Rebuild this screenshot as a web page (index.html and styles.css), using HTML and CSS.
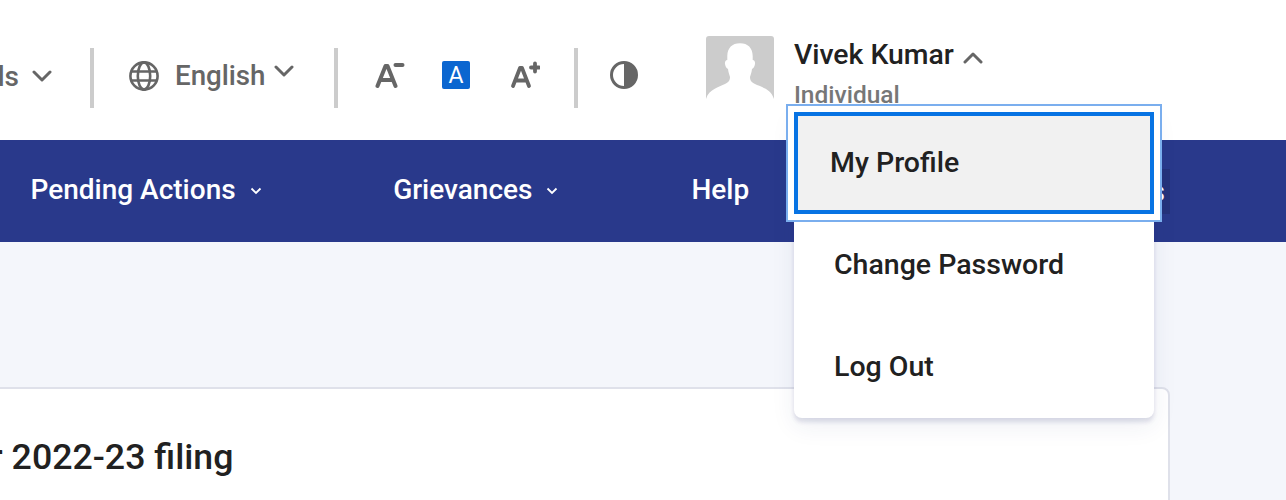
FILE: index.html
```html
<!DOCTYPE html>
<html lang="en">
<head>
<meta charset="utf-8">
<title>Profile menu</title>
<link rel="stylesheet" href="styles.css">
</head>
<body>
<div class="page">
  <header class="topbar">
    <div class="clip-left"><span>Downloads</span></div>
    <svg class="chev chev-first" viewBox="0 0 20 12"><path d="M2 2l8 8 8-8"/></svg>
    <span class="sep sep-a"></span>
    <svg class="globe" viewBox="0 0 30 30"><g fill="none" stroke="#666" stroke-width="2.6"><circle cx="15" cy="15" r="13.6"/><ellipse cx="15" cy="15" rx="6.2" ry="13.6"/><path d="M2.5 10.5h25M2.5 19.5h25"/></g></svg>
    <span class="lang">English</span>
    <svg class="chev chev-lang" viewBox="0 0 20 12"><path d="M2 2l8 8 8-8"/></svg>
    <span class="sep sep-b"></span>
    <svg class="font-ico ico-minus" viewBox="0 0 30 28"><g fill="none" stroke="#666" stroke-width="4" stroke-linecap="round" stroke-linejoin="round"><path d="M2.500 25L10.500 5h2l8 20M6 19h11"/><path d="M20.500 4h7"/></g></svg>
    <span class="font-active">A</span>
    <svg class="font-ico ico-plus" viewBox="0 0 30 28"><g fill="none" stroke="#666" stroke-width="3.8" stroke-linecap="round" stroke-linejoin="round"><path d="M3 25L10 7h2l7 18M6 19.500h10"/><path d="M21 6.500h8M25 2.500v8"/></g></svg>
    <span class="sep sep-c"></span>
    <svg class="contrast" viewBox="0 0 28 28"><circle cx="14" cy="14" r="12.500" fill="none" stroke="#666" stroke-width="3"/><path d="M14 1.500a12.500 12.500 0 0 1 0 25z" fill="#666"/></svg>
    <svg class="avatar" viewBox="0 0 68 66"><rect width="68" height="66" rx="3" fill="#ccc"/><path d="M34 7.300C42 7.300 46.500 12 46.700 20V24C48.500 24 49.300 26 49 28C48.600 30.500 47.500 32.500 46 33C45.500 37 44.500 39 44 41C44 44 45 46 49 48C55 51 65 53 68 63V66H0V63C3 53 13 51 19 48C23 46 24 44 24 41C23.500 39 22.500 37 22 33C20.500 32.500 19.400 30.500 19 28C18.700 26 19.500 24 21.300 24V20C21.500 12 26 7.300 34 7.300Z" fill="#fff"/></svg>
    <div class="user">
      <div class="user-name">Vivek Kumar <svg class="chev chev-up" viewBox="0 0 20 12"><path d="M2 10l8-8 8 8"/></svg></div>
      <div class="user-role">Individual</div>
    </div>
  </header>
  <nav class="mainnav">
    <a class="nav-item nav-pending">Pending Actions <svg class="nav-chev" viewBox="0 0 12 8"><path d="M1.500 1.500L6 6l4.500-4.500"/></svg></a>
    <a class="nav-item nav-griev">Grievances <svg class="nav-chev" viewBox="0 0 12 8"><path d="M1.500 1.500L6 6l4.500-4.500"/></svg></a>
    <a class="nav-item nav-help">Help</a>
    <a class="nav-item nav-last">Learning Resources</a>
  </nav>
  <main class="content">
    <section class="card">
      <h2 class="card-title">Get ready for 2022-23 filing</h2>
    </section>
  </main>
  <ul class="menu">
    <li class="menu-item menu-focus">My Profile</li>
    <li class="menu-item">Change Password</li>
    <li class="menu-item">Log Out</li>
  </ul>
</div>
</body>
</html>
```
FILE: styles.css
```css
* { box-sizing: border-box; }
html, body { margin: 0; padding: 0; }
body { font-family: Roboto, "Liberation Sans", sans-serif; background: #fff; }
.page { position: relative; width: 1286px; height: 500px; overflow: hidden; }

.topbar { display: flex; align-items: center; height: 140px; background: #fff; color: #666; font-weight: 500; font-size: 28px; }
.clip-left { width: 19px; overflow: hidden; display: flex; justify-content: flex-end; white-space: nowrap; margin-top: 12px; }
.chev { fill: none; stroke: #666; stroke-width: 3; stroke-linecap: round; stroke-linejoin: round; display: block; }
.chev-first { width: 20px; height: 12px; margin-left: 13px; margin-top: 12px; }
.sep { width: 4px; height: 60px; background: #ccc; flex: none; margin-top: 16px; }
.sep-a { margin-left: 38px; }
.globe { width: 30px; height: 30px; margin-left: 35px; margin-top: 12px; }
.lang { margin-left: 16px; margin-top: 11px; font-size: 27.700px; }
.chev-lang { width: 20px; height: 12px; margin-left: 8.400px; margin-top: 2px; }
.sep-b { margin-left: 40px; }
.font-ico { width: 30px; height: 28px; display: block; }
.ico-minus { margin-left: 37px; margin-top: 10px; }
.font-active { width: 28px; height: 28px; margin-left: 37px; margin-top: 10px; background: #0b66d0; color: #fff; border-radius: 2px; font-size: 23px; font-weight: 400; line-height: 29px; text-align: center; }
.ico-plus { margin-left: 40px; margin-top: 10px; }
.sep-c { margin-left: 34px; }
.contrast { width: 28px; height: 28px; margin-left: 32px; margin-top: 10px; }
.avatar { width: 68px; height: 66px; margin-left: 68px; margin-top: -2px; flex: none; }
.user { margin-left: 20px; margin-top: 6px; white-space: nowrap; }
.user-name { display: flex; align-items: center; color: #212121; font-size: 28.400px; line-height: 40px; gap: 9px; }
.chev-up { width: 20px; height: 12px; margin-top: 6px; }
.user-role { font-size: 24.500px; line-height: 32px; color: #777; margin-top: 4px; }

.mainnav { display: flex; align-items: center; height: 102px; padding-bottom: 3px; background: #29398b; padding-left: 30.500px; padding-right: 116px; color: #fff; font-size: 28px; font-weight: 500; }
.nav-item { display: flex; align-items: center; white-space: nowrap; }
.nav-chev { width: 12px; height: 8px; margin-left: 14px; margin-top: 2px; fill: none; stroke: #fff; stroke-width: 1.800; }
.nav-griev { margin-left: 131.500px; }
.nav-help { margin-left: 133px; }
.nav-last { margin-left: auto; height: 45px; margin-top: 3px; padding: 0 5px; background: #25327a; }

.content { height: 258px; background: #f4f6fb; padding-top: 145px; }
.card { width: 1470px; margin-left: -300px; height: 200px; background: #fff; border: 2px solid #dfe1ea; border-radius: 8px; padding: 46px 0 0 94px; }
.card-title { margin: 0; font-size: 35.700px; line-height: 44px; font-weight: 500; color: #212121; white-space: nowrap; }

.menu { position: absolute; left: 794px; top: 112px; width: 360px; margin: 0; padding: 0; list-style: none; background: #fff; border-radius: 0 0 8px 8px; box-shadow: 0 4px 4px rgba(40, 50, 110, .14), 0 8px 24px rgba(40, 50, 110, .08); }
.menu-item { height: 102px; display: flex; align-items: center; padding-left: 40px; padding-bottom: 2px; font-size: 28.500px; font-weight: 500; color: #212121; }
.menu-focus { padding-left: 32px; border: 4px solid #0773e3; background: #f1f1f1; box-shadow: 0 0 0 6px #fff; outline: 2px solid #7aaeee; outline-offset: 6px; }
```
